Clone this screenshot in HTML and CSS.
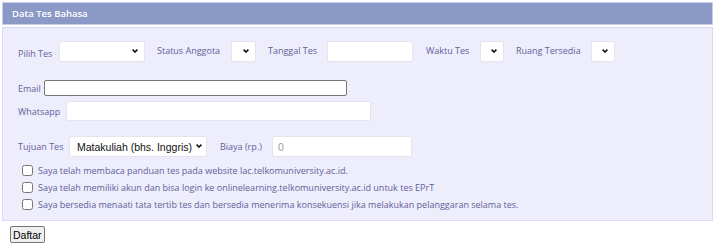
FILE: index.html
```html
<!DOCTYPE html>
<html>
<head>
<meta charset="utf-8">
<link rel="stylesheet" href="styles.css">
</head>
<body>
<div class="page">
  <div class="header">Data Tes Bahasa</div>
  <div class="panel">
    <div class="row row-top">
      <label class="lbl lbl-low w-pilih">Pilih Tes</label>
      <span class="selwrap w-86"><select class="sel"><option></option></select><svg class="arrow" viewBox="0 0 6 4"><path d="M0.6 0.6 L3 3 L5.4 0.6" /></svg></span>
      <label class="lbl w-status">Status Anggota</label>
      <span class="selwrap w-25"><select class="sel"><option></option></select><svg class="arrow" viewBox="0 0 6 4"><path d="M0.6 0.6 L3 3 L5.4 0.6" /></svg></span>
      <label class="lbl w-tanggal">Tanggal Tes</label>
      <input class="txt w-86 gap13" type="text">
      <label class="lbl w-waktu">Waktu Tes</label>
      <span class="selwrap w-24"><select class="sel"><option></option></select><svg class="arrow" viewBox="0 0 6 4"><path d="M0.6 0.6 L3 3 L5.4 0.6" /></svg></span>
      <label class="lbl w-ruang">Ruang Tersedia</label>
      <span class="selwrap w-24"><select class="sel"><option></option></select><svg class="arrow" viewBox="0 0 6 4"><path d="M0.6 0.6 L3 3 L5.4 0.6" /></svg></span>
    </div>
    <div class="row row-email">
      <label class="lbl w-email">Email</label>
      <input class="email" type="text">
    </div>
    <div class="row row-wa">
      <label class="lbl w-wa">Whatsapp</label>
      <input class="txt w-wa-in" type="text">
    </div>
    <div class="row row-tujuan">
      <label class="lbl w-tujuan">Tujuan Tes</label>
      <span class="selwrap sel-tujuan"><select class="sel"><option>Matakuliah (bhs. Inggris)</option></select><svg class="arrow arrow-t" viewBox="0 0 6 4"><path d="M0.6 0.6 L3 3 L5.4 0.6" /></svg></span>
      <label class="lbl w-biaya">Biaya (rp.)</label>
      <input class="txt w-biaya-in" type="text" placeholder="0">
    </div>
    <div class="checks">
      <label class="check"><input type="checkbox"><span>Saya telah membaca panduan tes pada website lac.telkomuniversity.ac.id.</span></label>
      <label class="check"><input type="checkbox"><span>Saya telah memiliki akun dan bisa login ke onlinelearning.telkomuniversity.ac.id untuk tes EPrT</span></label>
      <label class="check"><input type="checkbox"><span>Saya bersedia menaati tata tertib tes dan bersedia menerima konsekuensi jika melakukan pelanggaran selama tes.</span></label>
    </div>
  </div>
  <button class="btn">Daftar</button>
</div>
</body>
</html>
```

FILE: styles.css
```css
html, body {
  margin: 0;
  padding: 0;
  background: #ffffff;
}
.page {
  padding: 2px 5px 0 2px;
  font-family: "Open Sans", "DejaVu Sans", sans-serif;
  font-size: 9px;
  color: #62619a;
}
.header {
  height: 21px;
  border: 1px solid #c9cdef;
  background: #8b99c6;
  color: #ffffff;
  font-weight: 600;
  font-size: 9.5px;
  line-height: 21px;
  padding-left: 9px;
}
.panel {
  margin-top: 2px;
  border: 1px solid #dadaf6;
  background: #eeedfc;
  padding: 13px 0 7px 15px;
}
.row {
  display: flex;
  align-items: center;
}
.row-top { height: 21px; }
.row-top .selwrap, .row-top .txt { margin-right: 12px; }
.row-top .gap13 { margin-right: 13px; }
.lbl { flex: none; white-space: nowrap; margin-top: -3px; }
.lbl-low { margin-top: 3px; }
.w-pilih { width: 41px; }
.w-status { width: 74px; }
.w-tanggal { width: 59px; }
.w-waktu { width: 54px; }
.w-ruang { width: 75px; }
.selwrap {
  position: relative;
  display: block;
  flex: none;
  height: 21px;
}
.sel, .txt {
  box-sizing: border-box;
  height: 21px;
  border: 1px solid #e4e4ee;
  border-radius: 2px;
  background: #ffffff;
  font-family: "Liberation Sans", Arial, sans-serif;
  font-size: 10.5px;
  color: #111;
  margin: 0;
  flex: none;
}
.sel {
  -webkit-appearance: none;
  appearance: none;
  width: 100%;
  padding: 0 0 0 7px;
  outline: none;
}
.arrow {
  position: absolute;
  right: 7px;
  top: 8px;
  width: 6px;
  height: 4px;
  pointer-events: none;
}
.arrow path {
  fill: none;
  stroke: #111;
  stroke-width: 1.6;
}
.arrow-t { right: 5px; top: 8px; }
.w-86 { width: 86px; }
.w-25 { width: 25px; }
.w-24 { width: 24px; }
.row-email { margin-top: 18px; height: 16px; }
.w-email { width: 26px; margin-top: 0; }
.email {
  box-sizing: border-box;
  width: 303px;
  height: 16px;
  border: 1px solid #767676;
  border-radius: 2px;
  background: #fff;
  margin: 0;
  padding: 0 2px;
}
.row-wa { margin-top: 5px; height: 20px; }
.w-wa { width: 48px; margin-top: 0; }
.w-wa-in { width: 305px; height: 20px; }
.row-tujuan { margin-top: 15px; height: 21px; }
.w-tujuan { width: 51px; margin-top: 0; }
.sel-tujuan { width: 138px; }
.w-biaya { width: 52px; margin: 0 0 0 13px; }
.w-biaya-in { width: 140px; padding-left: 5px; }
.w-biaya-in::placeholder { color: #9a9a9a; }
.checks { margin-top: 5px; }
.check {
  display: flex;
  align-items: center;
  height: 17px;
  white-space: nowrap;
}
.check input {
  width: 11px;
  height: 11px;
  margin: 0 5px 0 4px;
}
.btn {
  margin: 5px 0 0 8px;
  height: 17px;
  padding: 0 2px;
  font-family: "Liberation Sans", Arial, sans-serif;
  font-size: 10.5px;
  color: #000;
  background: #efefef;
  border: 1px solid #767676;
  border-radius: 2px;
}
```
